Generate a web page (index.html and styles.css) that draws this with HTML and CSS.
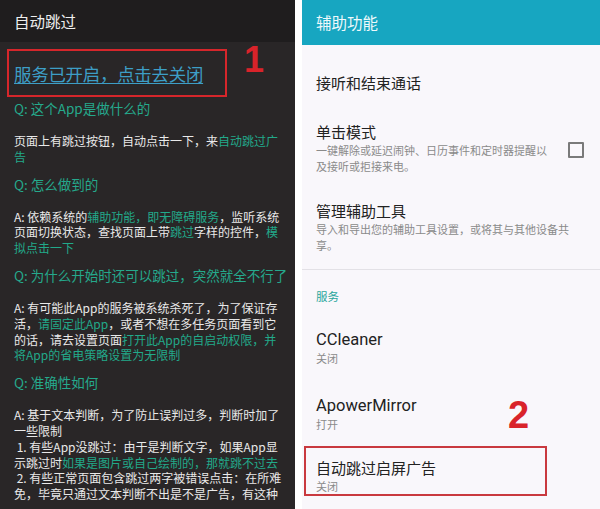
FILE: index.html
```html
<!DOCTYPE html>
<html lang="zh-CN">
<head>
<meta charset="utf-8">
<title>自动跳过</title>
<link rel="stylesheet" href="styles.css">
</head>
<body>
<div class="screens">
  <section class="panel dark">
    <header class="dark-bar">自动跳过</header>
    <div class="status-box"><a class="status-link" href="#">服务已开启，点击去关闭</a></div>
    <span class="mark mark-one">1</span>
    <div class="faq">
      <p class="q">Q: 这个App是做什么的</p>
      <p class="a">页面上有跳过按钮，自动点击一下，来<span class="hl">自动跳过广</span><br><span class="hl">告</span></p>
      <p class="q">Q: 怎么做到的</p>
      <p class="a">A: 依赖系统的<span class="hl">辅助功能，即无障碍服务</span>，监听系统<br>页面切换状态，查找页面上带<span class="hl">跳过</span>字样的控件，<span class="hl">模</span><br><span class="hl">拟点击一下</span></p>
      <p class="q">Q: 为什么开始时还可以跳过，突然就全不行了</p>
      <p class="a">A: 有可能此App的服务被系统杀死了，为了保证存<br>活，<span class="hl">请固定此App</span>，或者不想在多任务页面看到它<br>的话，请去设置页面<span class="hl">打开此App的自启动权限，并</span><br><span class="hl">将App的省电策略设置为无限制</span></p>
      <p class="q">Q: 准确性如何</p>
      <p class="a">A: 基于文本判断，为了防止误判过多，判断时加了<br>一些限制<br>&nbsp;1. 有些App没跳过：由于是判断文字，如果App显<br>示跳过时<span class="hl">如果是图片或自己绘制的，那就跳不过去</span><br>&nbsp;2. 有些正常页面包含跳过两字被错误点击：在所难<br>免，毕竟只通过文本判断不出是不是广告，有这种</p>
    </div>
  </section>
  <section class="panel light">
    <header class="teal-bar">辅助功能</header>
    <div class="item item-first">
      <div class="title">接听和结束通话</div>
    </div>
    <div class="item item-check">
      <div class="item-text">
        <div class="title">单击模式</div>
        <div class="desc">一键解除或延迟闹钟、日历事件和定时器提醒以<br>及接听或拒接来电。</div>
      </div>
      <span class="checkbox"></span>
    </div>
    <div class="item item-tools">
      <div class="title">管理辅助工具</div>
      <div class="desc">导入和导出您的辅助工具设置，或将其与其他设备共<br>享。</div>
    </div>
    <div class="divider"></div>
    <div class="section-label">服务</div>
    <div class="item item-svc">
      <div class="title latin">CCleaner</div>
      <div class="desc">关闭</div>
    </div>
    <div class="item item-svc2">
      <div class="title latin">ApowerMirror</div>
      <div class="desc">打开</div>
    </div>
    <span class="mark mark-two">2</span>
    <div class="item item-boxed">
      <div class="title">自动跳过启屏广告</div>
      <div class="desc">关闭</div>
    </div>
  </section>
</div>
</body>
</html>
```

FILE: styles.css
```css
html, body {
  margin: 0;
  padding: 0;
  background: #ffffff;
}
body {
  width: 600px;
  height: 509px;
  overflow: hidden;
  font-family: "Noto Sans CJK SC", "Noto Sans", sans-serif;
}
.screens {
  display: flex;
  height: 509px;
  gap: 7px;
}
.panel {
  position: relative;
  height: 509px;
  overflow: hidden;
}
.dark {
  width: 295px;
  background: #292627;
  color: #ececec;
}
.dark-bar {
  height: 42px;
  line-height: 42px;
  padding-left: 14px;
  background: #1f1d1e;
  font-size: 15.5px;
  color: #eeeeee;
}
.status-box {
  margin: 7px 0 0 7px;
  width: 211px;
  height: 44px;
  border: 2px solid #d6262b;
  display: flex;
  align-items: center;
  padding-left: 5px;
  box-sizing: content-box;
}
.status-link {
  font-size: 17.4px;
  color: #3d9ec6;
  text-decoration: underline;
  text-underline-offset: 2px;
  white-space: nowrap;
  letter-spacing: -0.2px;
}
.mark {
  position: absolute;
  font-family: "Liberation Sans", Arial, sans-serif;
  font-weight: bold;
  color: #d9232a;
  line-height: 1;
}
.mark-one {
  left: 244px;
  top: 42px;
  font-size: 36px;
}
.faq {
  padding: 0 8px 0 14px;
}
.q {
  margin: 0 0 16px 0;
  font-size: 13.5px;
  line-height: 18px;
  color: #25a98c;
  white-space: nowrap;
}
.faq .q:first-child {
  margin-top: 2px;
}
.a {
  margin: 0 0 10px 0;
  font-size: 12px;
  line-height: 15.8px;
  color: #e9e9e9;
  white-space: nowrap;
}
.hl {
  color: #22a98a;
}
.light {
  flex: 1;
  background: #f9f7fb;
  color: #212121;
}
.teal-bar {
  height: 45px;
  line-height: 45px;
  padding-left: 14px;
  background: #17a6c1;
  color: #eef9fb;
  font-size: 15.5px;
}
.item {
  padding-left: 14px;
}
.title {
  font-size: 15px;
  line-height: 20px;
  color: #222222;
}
.title.latin {
  font-family: Roboto, "Noto Sans CJK SC", sans-serif;
  font-size: 16.5px;
}
.desc {
  font-size: 11px;
  line-height: 16px;
  color: #8a8a8a;
  white-space: nowrap;
}
.item-first {
  margin-top: 28px;
}
.item-check {
  margin-top: 29px;
  display: flex;
  align-items: center;
  padding-right: 16px;
}
.item-text {
  flex: 1;
}
.checkbox {
  width: 12px;
  height: 12px;
  border: 2px solid #7a7a7a;
  border-radius: 1px;
  margin-top: 4px;
}
.item-tools {
  margin-top: 27px;
}
.divider {
  margin-top: 16px;
  height: 1px;
  background: #e3e1e6;
}
.section-label {
  margin-top: 18px;
  padding-left: 14px;
  font-size: 11.5px;
  line-height: 16px;
  color: #2aa69c;
}
.item-svc {
  margin-top: 26px;
}
.item-svc2 {
  margin-top: 30px;
}
.mark-two {
  left: 206px;
  top: 396px;
  font-size: 38px;
}
.item-boxed {
  margin: 14px 0 0 2px;
  width: 229px;
  padding: 10px 0 0 10px;
  height: 36px;
  border: 2px solid #c9393f;
  box-sizing: content-box;
}
```
